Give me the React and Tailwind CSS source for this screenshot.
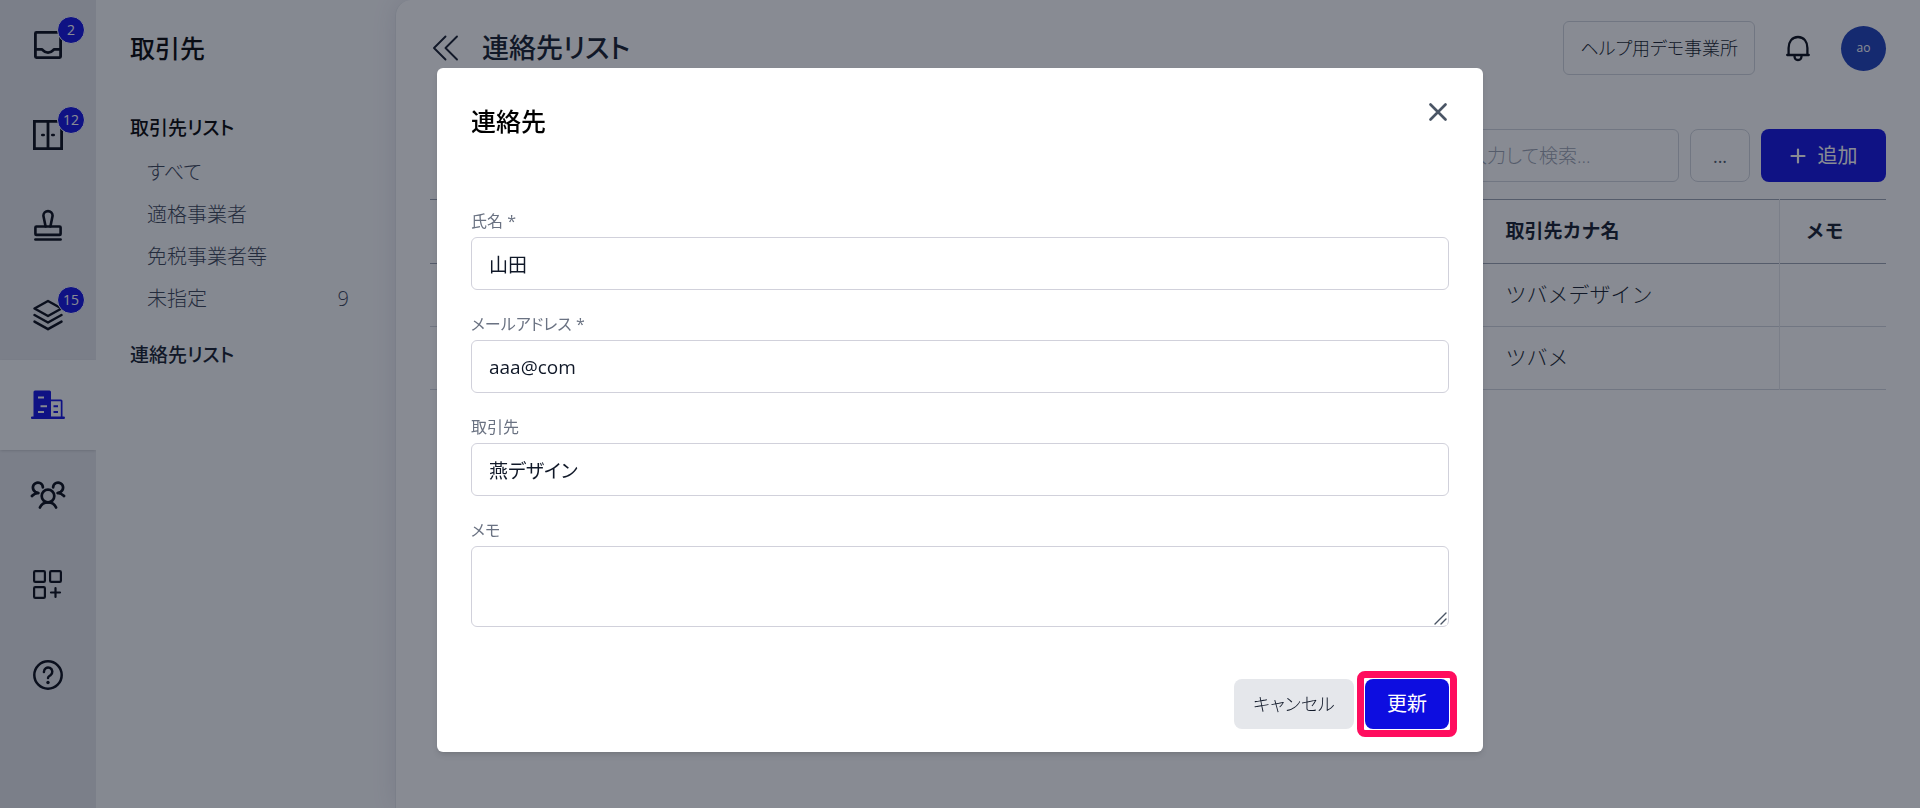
import React from "react";

const svgProps = { fill: "none", stroke: "currentColor", strokeLinecap: "round", strokeLinejoin: "round" };

const InboxIcon = () => (
  <svg className="size-9" viewBox="0 0 36 36" strokeWidth="2.8" {...svgProps}>
    <rect x="5.4" y="5.4" width="25.2" height="25.2" rx="1" />
    <path d="M5.4 22.4h6.2c1.6 0 1.6 3.2 6.4 3.2s4.8-3.2 6.4-3.2h6.2" />
  </svg>
);

const CabinetIcon = () => (
  <svg className="size-9" viewBox="0 0 36 36" strokeWidth="2.8" {...svgProps} strokeLinejoin="miter">
    <path d="M4.4 4.4h27.2v27.2H4.4z" />
    <path d="M18 4.4v27.2" />
    <path strokeWidth="2.4" d="M12.2 18h1.600M22.200 18h1.600" />
  </svg>
);

const StampIcon = () => (
  <svg className="size-9" viewBox="0 0 36 36" strokeWidth="2.6" {...svgProps}>
    <path d="M15.6 19.500 13.4 8.700a4.600 4.600 0 1 1 9.200 0L20.400 19.500" />
    <rect x="5.4" y="19.500" width="25.2" height="8.4" rx="1" />
    <path d="M5.4 32.500h25.200" />
  </svg>
);

const LayersIcon = () => (
  <svg className="size-9" viewBox="0 0 36 36" strokeWidth="2.5" {...svgProps}>
    <path d="M18 4 31.500 11.500 18 19 4.500 11.500z" />
    <path d="M4.500 18 18 25.500 31.500 18" />
    <path d="M4.500 24.600 18 32.200 31.500 24.600" />
  </svg>
);

const BuildingsIcon = () => (
  <svg className="size-9" viewBox="0 0 36 36">
    <path
      fill="currentColor"
      fillRule="evenodd"
      d="M3.500 5A1.500 1.500 0 0 1 5 3.500h14.500A1.500 1.500 0 0 1 21 5V12.500h10A1.500 1.500 0 0 1 32.500 14V29.500h1.200a1.300 1.300 0 0 1 0 2.600h-31.500a1.300 1.300 0 0 1 0-2.600h1.300zM8 9.500v2h6v-2zM10.500 18.300v2h6.500v-2zM8 24v2h6v-2zM21 14.300v15.200h9.800V14.300zM23.500 18.300h4.500v2h-4.500zM23.500 24h4.500v2h-4.500z"
    />
  </svg>
);

const GroupIcon = () => (
  <svg className="size-9 overflow-visible" viewBox="0 0 36 36" strokeWidth="2.700" {...svgProps}>
    <circle cx="18" cy="19" r="6.300" />
    <path d="M9.900 30.500c1.400-3.300 4-5.200 8.100-5.200s6.700 1.900 8.100 5.200" />
    <path d="M12.900 10.400A5 5 0 1 0 5.400 14.900l3 1.100M8.400 16c-3 .1-4.600 1-6.500 3" />
    <path d="M23.100 10.400a5 5 0 1 1 7.500 4.500l-3 1.100M27.600 16c3 .1 4.600 1 6.500 3" />
  </svg>
);

const AppsAddIcon = () => (
  <svg className="size-9" viewBox="0 0 36 36" strokeWidth="2.200" {...svgProps}>
    <rect x="4.100" y="4.100" width="10.800" height="10.800" rx="1.200" />
    <rect x="20.100" y="4.100" width="10.800" height="10.800" rx="1.200" />
    <rect x="4.100" y="20.100" width="10.800" height="10.800" rx="1.200" />
    <path d="M25.500 21v9M21 25.500h9" />
  </svg>
);

const HelpIcon = () => (
  <svg className="size-9" viewBox="0 0 36 36" strokeWidth="2.500" {...svgProps}>
    <circle cx="18" cy="18" r="13.700" />
    <path d="M13.900 15a4.200 4.200 0 1 1 6.600 3.200c-1.500 1-2.500 1.500-2.500 2.700" />
    <circle cx="18" cy="25.500" r="1.700" fill="currentColor" stroke="none" />
  </svg>
);

const BellIcon = () => (
  <svg className="size-8" viewBox="0 0 32 32" strokeWidth="2.300" {...svgProps}>
    <path d="M5.200 23h21.600M6.600 22.800V16c0-6.300 3.400-11 9.400-11s9.400 4.700 9.400 11v6.800" />
    <path d="M12.500 24c0 2.500 1.500 4 3.500 4s3.500-1.500 3.500-4" />
  </svg>
);

const DoubleChevronIcon = () => (
  <svg className="size-7" viewBox="0 0 28 28" strokeWidth="1.900" {...svgProps}>
    <path d="M14.500 2.500 3 14l11.500 11.500M26 2.500 14.500 14 26 25.500" />
  </svg>
);

const NAV = [
  { label: "受信箱", Icon: InboxIcon, badge: 2 },
  { label: "書庫", Icon: CabinetIcon, badge: 12 },
  { label: "承認", Icon: StampIcon },
  { label: "レイヤー", Icon: LayersIcon, badge: 15 },
  { label: "取引先", Icon: BuildingsIcon, active: true },
  { label: "メンバー", Icon: GroupIcon },
  { label: "アプリ", Icon: AppsAddIcon },
  { label: "ヘルプ", Icon: HelpIcon },
];

const FILTERS = [
  { label: "すべて" },
  { label: "適格事業者" },
  { label: "免税事業者等" },
  { label: "未指定", count: 9 },
];

function Rail() {
  return (
    <nav className="w-24 shrink-0 bg-gray-200">
      {NAV.map(({ label, Icon, badge, active }) => (
        <a
          key={label}
          href="#"
          aria-label={label}
          className={
            active
              ? "flex h-[90px] items-center justify-center bg-gray-50 text-[#0d0de0] shadow-sm"
              : "flex h-[90px] items-center justify-center text-gray-950"
          }
        >
          <span className="relative">
            <Icon />
            {badge && (
              <span className="absolute -top-[11px] left-[27px] flex size-7 items-center justify-center rounded-full border border-gray-50 bg-[#0d0de0] text-sm leading-none text-white">
                {badge}
              </span>
            )}
          </span>
        </a>
      ))}
    </nav>
  );
}

function Sidebar() {
  return (
    <aside className="w-[299px] shrink-0 bg-gray-50 pl-[34px] pr-[46px]">
      <h2 className="pt-[30px] text-[25px] leading-9 font-medium text-black">取引先</h2>
      <a href="#" className="mt-[47px] block text-[19px] leading-[30px] font-medium text-black">
        取引先リスト
      </a>
      <ul className="mt-[9px] pl-[17px]">
        {FILTERS.map((f) => (
          <li key={f.label}>
            <a href="#" className="flex h-[42px] items-center justify-between text-xl font-light text-gray-700">
              <span>{f.label}</span>
              <span>{f.count}</span>
            </a>
          </li>
        ))}
      </ul>
      <a href="#" className="mt-5 block text-[19px] leading-[30px] font-medium text-gray-900">
        連絡先リスト
      </a>
    </aside>
  );
}

function Main() {
  return (
    <main className="min-w-0 flex-1 rounded-tl-2xl border-l border-gray-200 bg-white px-[34px] shadow-[0_0_24px_rgba(60,50,110,0.12)]">
      <header className="flex h-24 items-center">
        <button type="button" aria-label="サイドバーを閉じる" className="ml-px text-gray-900">
          <DoubleChevronIcon />
        </button>
        <h1 className="ml-[23px] flex-1 text-[27px] font-medium text-gray-900">連絡先リスト</h1>
        <button type="button" className="h-[54px] rounded-md border border-gray-300 px-4 text-lg font-light text-gray-900">
          ヘルプ用デモ事業所
        </button>
        <button type="button" aria-label="通知" className="ml-[27px] text-gray-950">
          <BellIcon />
        </button>
        <button type="button" className="ml-[27px] size-[45px] rounded-full bg-blue-800 text-xs text-white">
          ao
        </button>
      </header>
      <div className="mt-[33px] flex justify-end gap-[11px]">
        <input
          type="search"
          aria-label="検索"
          placeholder="入力して検索..."
          className="h-[53px] w-[230px] rounded-md border border-gray-300 px-[18px] text-[19px] font-light placeholder:text-gray-400"
        />
        <button type="button" aria-label="その他の操作" className="h-[53px] w-[60px] rounded-lg border border-gray-300 text-lg text-gray-600">
          ...
        </button>
        <button type="button" className="flex h-[53px] w-[125px] items-center justify-center gap-3 rounded-lg bg-[#0d0de0] text-xl text-white">
          <svg className="size-4" viewBox="0 0 16 16" strokeWidth="2.200" {...svgProps}>
            <path d="M8 1.500v13M1.500 8h13" />
          </svg>
          追加
        </button>
      </div>
      <table className="mt-[17px] w-full table-fixed border-t border-gray-400 text-left text-gray-900 [font-feature-settings:normal]">
        <thead>
          <tr className="h-16 border-b border-gray-400 text-[19px]">
            <td className="px-[26px]" />
            <th className="w-[300px] border-l border-gray-200 px-[26px] font-bold">取引先カナ名</th>
            <th className="w-[107px] border-l border-gray-200 px-[26px] font-bold">メモ</th>
          </tr>
        </thead>
        <tbody>
          {["ツバメデザイン", "ツバメ"].map((kana) => (
            <tr key={kana} className="h-[63px] border-b border-gray-300 text-[21px]">
              <td className="px-[26px]" />
              <td className="border-l border-gray-200 px-[26px] font-light">{kana}</td>
              <td className="border-l border-gray-200 px-[26px]" />
            </tr>
          ))}
        </tbody>
      </table>
    </main>
  );
}

const FIELDS = [
  { id: "name", label: "氏名 *", value: "山田", type: "text" },
  { id: "email", label: "メールアドレス *", value: "aaa@com", type: "email" },
  { id: "partner", label: "取引先", value: "燕デザイン", type: "text" },
];

function ContactDialog() {
  return (
    <div className="fixed inset-0 flex items-start justify-center overflow-auto bg-[#111827]/50 pt-[68px]">
      <form
        role="dialog"
        aria-modal="true"
        aria-labelledby="dialog-title"
        className="w-full max-w-[1046px] rounded-md bg-white px-[34px] pt-[33px] pb-[23px] shadow-md"
      >
        <div className="flex items-start justify-between">
          <h2 id="dialog-title" className="text-[25px] leading-10 font-medium text-black">
            連絡先
          </h2>
          <button type="button" aria-label="閉じる" className="text-gray-600">
            <svg className="size-[22px]" viewBox="0 0 22 22" strokeWidth="2.700" {...svgProps}>
              <path d="M3.500 3.500l15 15M18.500 3.500l-15 15" />
            </svg>
          </button>
        </div>
        <div className="mt-[70px] flex flex-col gap-6">
          {FIELDS.map((f) => (
            <div key={f.id} className="flex flex-col gap-[6px]">
              <label htmlFor={f.id} className="text-base leading-5 text-gray-500">
                {f.label}
              </label>
              <input
                id={f.id}
                type={f.type}
                defaultValue={f.value}
                className="h-[53px] rounded-md border border-[#d1d1db] px-[17px] text-[19px] text-gray-900"
              />
            </div>
          ))}
          <div className="flex flex-col gap-[6px]">
            <label htmlFor="memo" className="text-base leading-5 text-gray-500">
              メモ
            </label>
            <div className="relative flex">
              <textarea
                id="memo"
                className="h-[81px] flex-1 resize-y rounded-md border border-[#d1d1db] px-[17px] py-3 text-[19px] text-gray-900"
              />
              <svg
                className="pointer-events-none absolute right-[2px] bottom-[2px] size-[13px] bg-white text-gray-600"
                viewBox="0 0 13 13"
                strokeWidth="1.400"
                {...svgProps}
              >
                <path d="M1 12 12 1M7 12l5-5" />
              </svg>
            </div>
          </div>
        </div>
        <div className="mt-[52px] flex justify-end gap-[11px]">
          <button type="button" className="h-[50px] w-[120px] rounded-lg bg-gray-200 text-lg font-light text-gray-900">
            キャンセル
          </button>
          <div className="relative">
            <button type="submit" className="block h-[50px] w-[84px] rounded-lg bg-[#0d0de0] text-xl text-white">
              更新
            </button>
            <span className="pointer-events-none absolute -inset-2 rounded-lg border-[7px] border-[#ff0d5e]" />
          </div>
        </div>
      </form>
    </div>
  );
}

export default function App() {
  return (
    <div
      lang="ja"
      className="flex min-h-screen bg-gray-50 font-['Open_Sans','Noto_Sans_CJK_JP',sans-serif] [font-feature-settings:'palt']"
    >
      <Rail />
      <Sidebar />
      <Main />
      <ContactDialog />
    </div>
  );
}
